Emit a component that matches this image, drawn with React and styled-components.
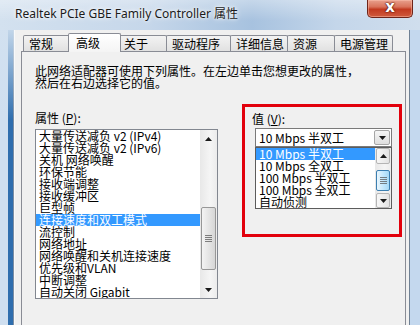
import React from "react";
import styled, { createGlobalStyle, css } from "styled-components";

const GlobalStyle = createGlobalStyle`
  html, body {
    margin: 0;
    padding: 0;
    width: 420px;
    height: 325px;
    overflow: hidden;
    background: #cddcec;
  }
  body {
    font-family: "Noto Sans CJK SC", sans-serif;
  }
`;

const Window = styled.div`
  width: 420px;
  height: 325px;
  display: flex;
  flex-direction: column;
  background: linear-gradient(to right, #d3e1ef 0%, #c6d7ea 35%, #a7c2df 60%, #c4d6ea 80%, #d0deed 100%);
`;

const TitleBar = styled.div`
  height: 30px;
  flex: none;
  display: flex;
  align-items: flex-start;
  padding-left: 15px;
  background: linear-gradient(to bottom, rgba(255, 255, 255, 0.35), rgba(255, 255, 255, 0) 70%);
`;

const Title = styled.div`
  margin-top: 6px;
  font-family: "Noto Sans", "Noto Sans CJK SC", sans-serif;
  font-size: 12px;
  line-height: 16px;
  color: #1b1b1b;
  text-shadow: 0 0 6px #ffffff, 0 0 3px #ffffff;
  white-space: nowrap;
`;

const CloseButton = styled.div`
  margin-left: auto;
  margin-right: 7px;
  width: 46px;
  height: 18px;
  box-sizing: border-box;
  border: 1px solid #6e2419;
  border-top: none;
  border-radius: 0 0 5px 5px;
  background: linear-gradient(to bottom, #e8a08d 0%, #d9735b 40%, #c23a20 55%, #cf5a3d 100%);
  box-shadow: inset 0 0 0 1px rgba(255, 200, 180, 0.45);
  display: flex;
  align-items: center;
  justify-content: center;
  color: #ffffff;
  font-family: "DejaVu Sans", sans-serif;
  font-weight: bold;
  font-size: 15px;
  line-height: 15px;
  padding-bottom: 2px;
  text-shadow: 0 0 2px #5a1509, 0 0 1px #5a1509, 0 0 1px #5a1509;
`;

const Body = styled.div`
  flex: 1;
  display: flex;
  min-height: 0;
`;

const LeftFrame = styled.div`
  width: 14px;
  flex: none;
  background:
    linear-gradient(to bottom, rgba(210, 225, 240, 0.9) 0px, rgba(210, 225, 240, 0) 90px),
    linear-gradient(to right, #cfdff0 0 8px, #2f6eae 8px 13px, #7d8ea2 13px 14px);
`;

const RightFrame = styled.div`
  width: 11px;
  flex: none;
  background: linear-gradient(to right, #6f8093 0 1px, #c4d8ee 1px 100%);
`;

const Client = styled.div`
  flex: 1;
  display: flex;
  flex-direction: column;
  background: #f0f0f0;
  border-left: 1px solid #f7f9fb;
  padding: 3px 3px 0 6px;
  min-width: 0;
`;

const TabStrip = styled.div`
  height: 18px;
  flex: none;
  display: flex;
  align-items: flex-end;
  padding-left: 3px;
`;

const Tab = styled.div`
  width: ${(p) => p.$w}px;
  height: 16px;
  flex: none;
  box-sizing: border-box;
  margin-left: -1px;
  padding-left: 5px;
  border: 1px solid #898c95;
  border-bottom: none;
  border-radius: 2px 2px 0 0;
  background: linear-gradient(to bottom, #f3f3f3, #e1e1e1);
  font-size: 12px;
  line-height: 15px;
  color: #000;
  white-space: nowrap;
  ${(p) =>
    p.$active &&
    css`
      position: relative;
      z-index: 1;
      height: 19px;
      width: ${p.$w + 4}px;
      margin: 0 -2px -1px -3px;
      padding-left: 7px;
      line-height: 17px;
      background: linear-gradient(to bottom, #ffffff, #f4f4f4);
    `}
`;

const Page = styled.div`
  flex: 1;
  border: 1px solid #898c95;
  border-bottom: none;
  background: #f0f0f0;
  padding: 13px 0 0 13px;
`;

const Description = styled.div`
  font-size: 12px;
  line-height: 12px;
  color: #000;
  white-space: nowrap;
`;

const Row = styled.div`
  display: flex;
  align-items: flex-start;
  margin-top: 15px;
`;

const Column = styled.div`
  width: 183px;
  flex: none;
  padding-top: 8px;
`;

const Label = styled.div`
  font-size: 12px;
  line-height: 12px;
  color: #000;
  u {
    text-decoration: underline;
  }
`;

const ListBox = styled.div`
  margin-top: 5px;
  height: 170px;
  box-sizing: border-box;
  border: 1px solid #828790;
  background: #ffffff;
  display: flex;
`;

const Items = styled.div`
  flex: 1;
  min-width: 0;
  overflow: hidden;
`;

const Item = styled.div`
  height: 12px;
  padding-left: 3px;
  font-size: 12px;
  line-height: 12px;
  white-space: nowrap;
  color: ${(p) => (p.$selected ? "#ffffff" : "#000000")};
  background: ${(p) => (p.$selected ? "#3399ff" : "transparent")};
`;

const ScrollBar = styled.div`
  width: ${(p) => p.$w}px;
  flex: none;
  display: flex;
  flex-direction: column;
  background: linear-gradient(to right, #e8e8e8, #f5f5f5 60%, #ececec);
`;

const ArrowCell = styled.div`
  height: ${(p) => p.$h}px;
  flex: none;
  display: flex;
  align-items: center;
  justify-content: center;
  box-sizing: border-box;
  ${(p) =>
    p.$boxed &&
    css`
      margin: 0 1px;
      border: 1px solid #b5b5b5;
      border-radius: 2px;
      background: linear-gradient(to right, #f7f7f7, #e3e3e3);
    `}
`;

const Track = styled.div`
  flex: 1;
  display: flex;
  flex-direction: column;
`;

const Thumb = styled.div`
  margin: ${(p) => p.$top}px 1px 0 1px;
  height: ${(p) => p.$h}px;
  box-sizing: border-box;
  border: 1px solid ${(p) => (p.$hot ? "#3c7fb1" : "#979797")};
  border-radius: 2px;
  background: ${(p) =>
    p.$hot
      ? "linear-gradient(to right, #eaf6fd, #bee6fd 60%, #a7d9f5)"
      : "linear-gradient(to right, #f3f3f3, #e2e2e2 60%, #d6d6d6)"};
  display: flex;
  align-items: center;
  justify-content: center;
`;

const Grip = styled.div`
  width: 7px;
  height: 7px;
  background: repeating-linear-gradient(to bottom, #5a5a5a 0 1px, transparent 1px 2px);
  opacity: 0.75;
`;

const Arrow = ({ down }) => (
  <svg width="7" height="4" viewBox="0 0 7 4">
    <path d={down ? "M0 0H7L3.5 4Z" : "M0 4H7L3.5 0Z"} fill="#1a1a1a" />
  </svg>
);

const ValueBox = styled.div`
  margin-left: 24px;
  width: 160px;
  height: 133px;
  flex: none;
  box-sizing: border-box;
  border: 3px solid #e2000c;
  padding: 6px 0 0 7px;
`;

const Combo = styled.div`
  margin: 3px 0 0 3px;
  width: 137px;
  height: 19px;
  box-sizing: border-box;
  border: 1px solid #7a7a7a;
  background: #ffffff;
  display: flex;
  align-items: center;
  padding: 0 1px 0 3px;
  font-size: 12px;
  line-height: 12px;
  color: #000;
`;

const ComboText = styled.div`
  flex: 1;
  white-space: nowrap;
`;

const ComboButton = styled.div`
  width: 16px;
  height: 15px;
  box-sizing: border-box;
  border: 1px solid #a6a6a6;
  border-radius: 2px;
  background: linear-gradient(to bottom, #f6f6f6, #dedede);
  display: flex;
  align-items: center;
  justify-content: center;
`;

const Popup = styled.div`
  margin-left: 3px;
  width: 137px;
  height: 62px;
  box-sizing: border-box;
  border: 1px solid #5c5c5c;
  background: #ffffff;
  display: flex;
`;

const properties = [
  "大量传送减负 v2 (IPv4)",
  "大量传送减负 v2 (IPv6)",
  "关机 网络唤醒",
  "环保节能",
  "接收端调整",
  "接收缓冲区",
  "巨型帧",
  "连接速度和双工模式",
  "流控制",
  "网络地址",
  "网络唤醒和关机连接速度",
  "优先级和VLAN",
  "中断调整",
  "自动关闭 Gigabit",
];

const values = ["10 Mbps 半双工", "10 Mbps 全双工", "100 Mbps 半双工", "100 Mbps 全双工", "自动侦测"];

const tabs = [
  { label: "常规", w: 48 },
  { label: "高级", w: 49, active: true },
  { label: "关于", w: 49 },
  { label: "驱动程序", w: 65 },
  { label: "详细信息", w: 58 },
  { label: "资源", w: 48 },
  { label: "电源管理", w: 59 },
];

export default function App() {
  return (
    <>
      <GlobalStyle />
      <Window>
        <TitleBar>
          <Title>Realtek PCIe GBE Family Controller 属性</Title>
          <CloseButton>x</CloseButton>
        </TitleBar>
        <Body>
          <LeftFrame />
          <Client>
            <TabStrip>
              {tabs.map((t) => (
                <Tab key={t.label} $w={t.w} $active={t.active}>
                  {t.label}
                </Tab>
              ))}
            </TabStrip>
            <Page>
              <Description>
                此网络适配器可使用下列属性。在左边单击您想更改的属性，
                <br />
                然后在右边选择它的值。
              </Description>
              <Row>
                <Column>
                  <Label>
                    属性 (<u>P</u>):
                  </Label>
                  <ListBox>
                    <Items>
                      {properties.map((p, i) => (
                        <Item key={p} $selected={i === 7}>
                          {p}
                        </Item>
                      ))}
                    </Items>
                    <ScrollBar $w={17}>
                      <ArrowCell $h={17}>
                        <Arrow />
                      </ArrowCell>
                      <Track>
                        <Thumb $top={60} $h={63}>
                          <Grip />
                        </Thumb>
                      </Track>
                      <ArrowCell $h={17}>
                        <Arrow down />
                      </ArrowCell>
                    </ScrollBar>
                  </ListBox>
                </Column>
                <ValueBox>
                  <Label>
                    值 (<u>V</u>):
                  </Label>
                  <Combo>
                    <ComboText>10 Mbps 半双工</ComboText>
                    <ComboButton>
                      <Arrow down />
                    </ComboButton>
                  </Combo>
                  <Popup>
                    <Items>
                      {values.map((v, i) => (
                        <Item key={v} $selected={i === 0}>
                          {v}
                        </Item>
                      ))}
                    </Items>
                    <ScrollBar $w={16}>
                      <ArrowCell $h={16} $boxed>
                        <Arrow />
                      </ArrowCell>
                      <Track>
                        <Thumb $top={6} $h={21} $hot>
                          <Grip />
                        </Thumb>
                      </Track>
                      <ArrowCell $h={15} $boxed>
                        <Arrow down />
                      </ArrowCell>
                    </ScrollBar>
                  </Popup>
                </ValueBox>
              </Row>
            </Page>
          </Client>
          <RightFrame />
        </Body>
      </Window>
    </>
  );
}
